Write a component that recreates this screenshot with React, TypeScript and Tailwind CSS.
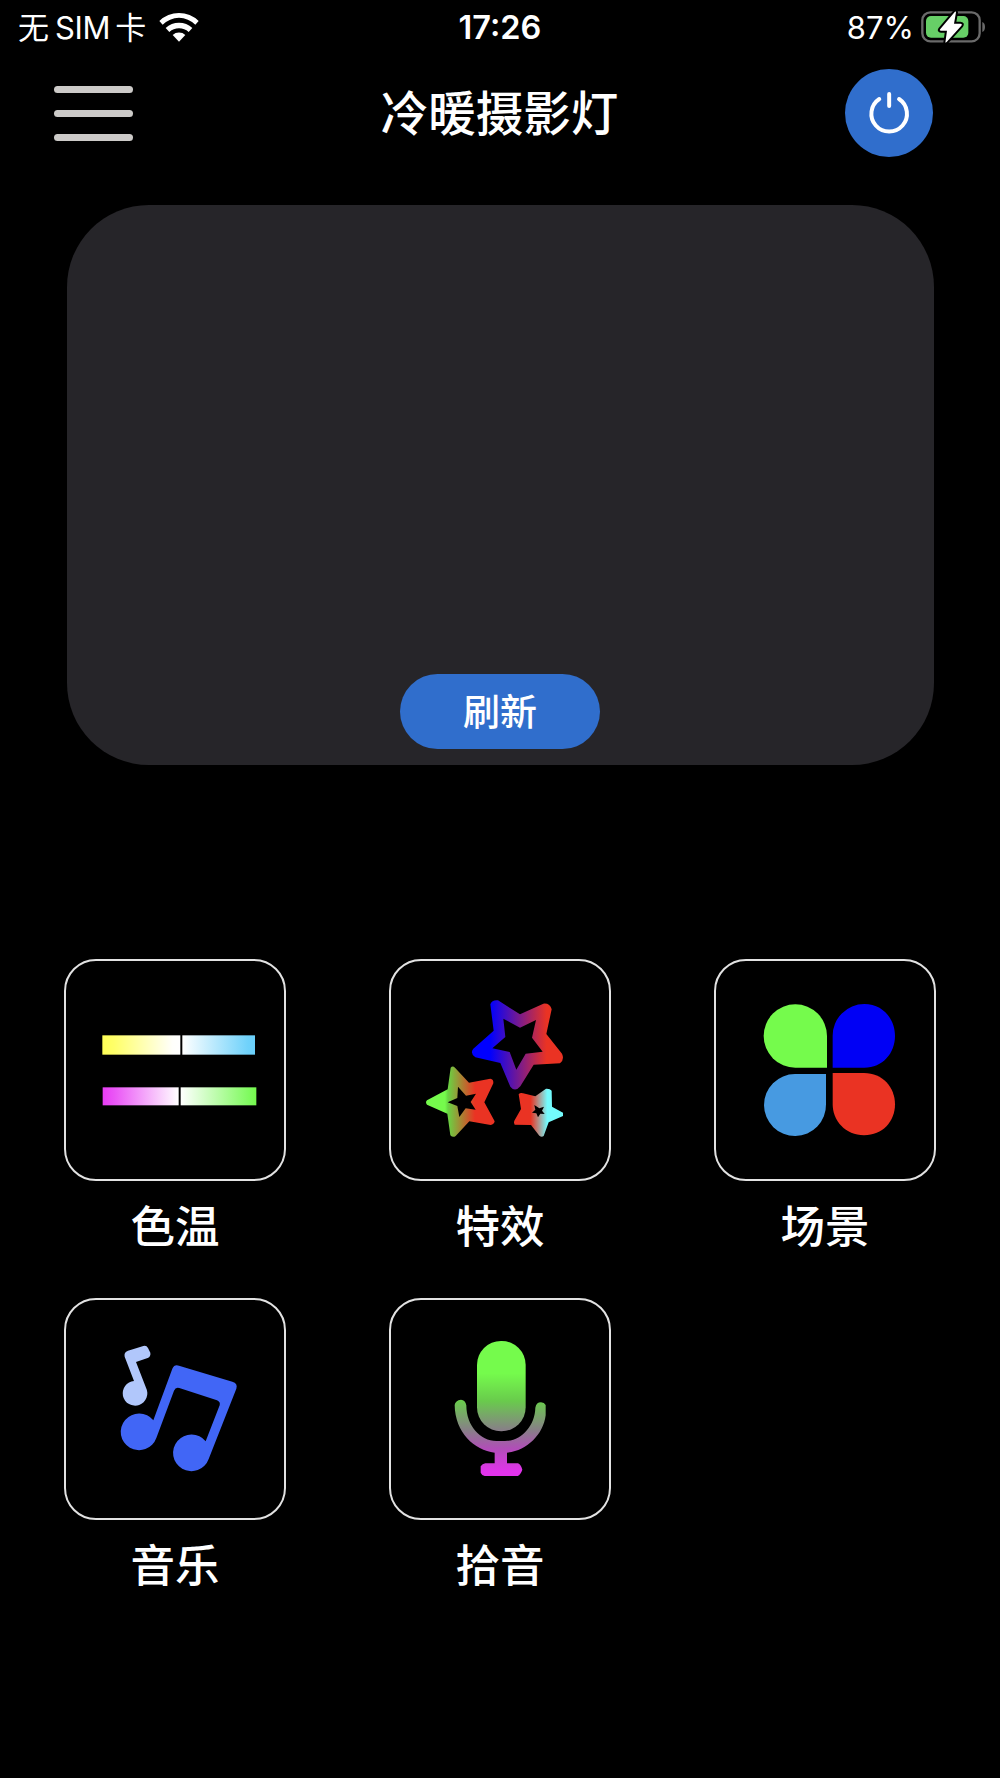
import type { ReactNode } from "react";

function WifiIcon() {
  return (
    <svg className="ml-[13px] h-[30px] w-10" viewBox="0 0 120 90">
      <path d="M1 27 A84 84 0 0 1 119 27 L109 38 A69 69 0 0 0 11 38 Z" fill="#fff" />
      <path d="M20 48 A58 58 0 0 1 100 48 L89 60 A43 43 0 0 0 31 60 Z" fill="#fff" />
      <path d="M41 69 A28 28 0 0 1 79 69 L60 89 Z" fill="#fff" />
    </svg>
  );
}

function BatteryIcon() {
  return (
    <svg className="ml-[6px] h-[34px] w-[66px]" viewBox="0 0 198 102">
      <rect x="7" y="7" width="172" height="87" rx="24" fill="none" stroke="#6a6a6a" strokeWidth="7" />
      <path d="M187 36 Q195 39 195 51 Q195 63 187 66 Z" fill="#6a6a6a" />
      <rect x="18" y="18" width="127" height="65" rx="15" fill="#67cf67" />
      <path
        d="M106 4 L61 57 Q57 62 63 62 H81 L76 98 L80 96 L124 47 Q128 41 121 41 H102 L108 7 Z"
        fill="#fff"
        stroke="#000"
        strokeWidth="12"
        strokeLinejoin="round"
        paintOrder="stroke"
      />
    </svg>
  );
}

function TemperatureIcon() {
  return (
    <svg className="h-full w-full" viewBox="48 33 654 654">
      <defs>
        <linearGradient id="yellow"><stop stopColor="#ffff55" /><stop offset=".15" stopColor="#ffff69" /><stop offset=".9" stopColor="#fffffb" /><stop offset="1" stopColor="#fff" /></linearGradient>
        <linearGradient id="sky"><stop stopColor="#fff" /><stop offset=".9" stopColor="#70d2fb" /><stop offset="1" stopColor="#69d0fb" /></linearGradient>
        <linearGradient id="pink"><stop stopColor="#e83cf5" /><stop offset=".15" stopColor="#ea55f6" /><stop offset="1" stopColor="#fff" /></linearGradient>
        <linearGradient id="lime"><stop stopColor="#fff" /><stop offset=".9" stopColor="#80fa60" /><stop offset="1" stopColor="#75f94d" /></linearGradient>
      </defs>
      <rect x="157" y="256" width="234" height="58" fill="url(#yellow)" />
      <rect x="397" y="256" width="218" height="58" fill="url(#sky)" />
      <rect x="158" y="412" width="228" height="54" fill="url(#pink)" />
      <rect x="392" y="412" width="227" height="54" fill="url(#lime)" />
    </svg>
  );
}

function EffectsIcon() {
  return (
    <svg className="h-full w-full" viewBox="33 33 654 654" fillRule="evenodd">
      <defs>
        <linearGradient id="starBig" gradientUnits="userSpaceOnUse" x1="330" x2="500" y1="0" y2="0"><stop stopColor="#0000ff" /><stop offset="1" stopColor="#ea3323" /></linearGradient>
        <linearGradient id="starLeft" gradientUnits="userSpaceOnUse" x1="195" x2="285" y1="0" y2="0"><stop stopColor="#75fb4c" /><stop offset="0.1" stopColor="#68d443" /><stop offset="1" stopColor="#ea3323" /></linearGradient>
        <linearGradient id="starRight" gradientUnits="userSpaceOnUse" x1="452" x2="502" y1="0" y2="0"><stop stopColor="#ea3323" /><stop offset="1" stopColor="#73fbfd" /></linearGradient>
      </defs>
      <path
        fill="url(#starBig)"
        d="M331 163 Q336 149 354 151 L420 193 L490 161 Q510 159 515 178 L499 252 L546 311 Q554 329 540 340 L461 344 L421 409 Q405 428 391 410 L361 339 L286 322 Q269 310 280 296 L341 242 Z M370 206 L376 261 L337 295 L389 306 L409 359 L437 311 L488 305 L456 263 L468 210 L420 233 Z"
      />
      <path
        fill="url(#starLeft)"
        d="M212 353 Q218 346 225 353 L267 398 L331 386 Q341 387 340 400 L313 457 L344 514 Q342 524 332 525 L268 514 L227 558 Q219 564 211 556 L202 491 L141 464 Q135 457 141 451 L203 418 Z M234 410 L232 444 L203 457 L232 468 L238 501 L257 475 L287 479 L272 456 L288 431 L258 437 Z"
      />
      <path
        fill="url(#starRight)"
        d="M416 433 Q421 427 429 430 L466 439 L498 416 Q510 415 515 422 L516 470 L549 488 V498 L506 517 L491 558 Q485 563 478 557 L453 525 L404 524 Q400 517 403 512 L423 477 Z M463 465 L466 479 L456 488 L469 490 L474 502 L481 491 L494 492 L486 482 L492 470 L478 475 Z"
      />
    </svg>
  );
}

function SceneIcon() {
  return (
    <svg className="h-full w-full" viewBox="48 33 654 654">
      <path d="M381 353 H286 A95 95 0 1 1 381 258 Z" fill="#75fb4c" />
      <path d="M398 353 V258 A95 95 0 0 1 493 162 C548 162 585 206 585 258 S548 353 493 353 Z" fill="#0000f5" />
      <path d="M378 372 V463 A93 93 0 1 1 285 372 Z" fill="#479ae1" />
      <path d="M398 369 H492 C548 369 585 412 585 463 S548 556 492 556 S398 512 398 463 Z" fill="#ea3323" />
    </svg>
  );
}

function MusicIcon() {
  return (
    <svg className="h-full w-full" viewBox="49 30 654 654">
      <path
        fill="#b1c7fb"
        d="M225 200 Q222 187 235 182 L281 168 Q290 165 295 174 L302 188 Q304 199 294 204 L259 216 L289 293 A37 37 0 1 1 253 273 Z"
      />
      <path
        fill="#4166f6"
        d="M368 236 Q374 222 388 227 L548 275 Q565 280 560 296 L477 507 A55 55 0 1 1 468 454 L510 346 Q513 336 502 331 L389 294 Q378 290 373 302 L320 444 A55 55 0 1 1 311 391 Z"
      />
    </svg>
  );
}

function MicrophoneIcon() {
  return (
    <svg className="h-full w-full" viewBox="34 30 654 654">
      <defs>
        <linearGradient id="mic" gradientUnits="userSpaceOnUse" x1="0" x2="0" y1="250" y2="545">
          <stop stopColor="#75fb4c" />
          <stop offset=".28" stopColor="#69cb4c" />
          <stop offset=".58" stopColor="#887f88" />
          <stop offset=".76" stopColor="#b04fb7" />
          <stop offset="1" stopColor="#e233ec" />
        </linearGradient>
      </defs>
      <rect x="292" y="153" width="146" height="271" rx="72" fill="url(#mic)" />
      <path
        fill="url(#mic)"
        d="M225 345 Q227 331 244 329 Q257 330 260 346 C260 408 302 453 350 453 H376 C424 453 466 408 467 353 Q470 337 484 337 Q494 337 498 345 V376 C491 434 441 483 382 488 V520 H415 Q423 522 428 539 Q423 554 414 558 H315 Q306 556 303 548 V529 Q308 521 317 520 H345 V488 C284 481 226 427 225 345 Z"
      />
    </svg>
  );
}

function ModeTile({ label, children }: { label: string; children: ReactNode }) {
  return (
    <button className="flex h-[339px] w-[222px] flex-col items-center">
      <span className="block size-[222px] rounded-[32px] border-2 border-[#e2e2e2]">{children}</span>
      <span className="mt-[14px] text-[44.5px] leading-[64px] font-medium">{label}</span>
    </button>
  );
}

export default function App() {
  return (
    <main className="h-[1778px] w-[1000px] overflow-hidden bg-black font-['Inter','Noto_Sans_CJK_SC',sans-serif] text-white">
      <header className="grid h-[54px] grid-cols-3 items-center text-[31px] leading-none">
        <div className="flex items-center pl-[18px] whitespace-nowrap">
          <span className="text-[31px]">无</span>
          <span className="ml-1.5 pt-px tracking-[-0.3px]">SIM</span>
          <span className="ml-[5px] text-[31px]">卡</span>
          <WifiIcon />
        </div>
        <time className="pt-[3px] text-center text-[32.5px] font-semibold">17:26</time>
        <div className="flex items-center justify-end pr-[14px]">
          <span className="pt-px">87%</span>
          <BatteryIcon />
        </div>
      </header>

      <nav className="grid h-[118px] grid-cols-[1fr_auto_1fr] items-center pr-[67px] pl-[54px]">
        <button className="flex w-[79px] flex-col gap-[17px] pt-px" aria-label="菜单">
          <span className="h-[7px] w-[79px] rounded-full bg-[#cccac8]" />
          <span className="h-[7px] w-[79px] rounded-full bg-[#cccac8]" />
          <span className="h-[7px] w-[79px] rounded-full bg-[#cccac8]" />
        </button>
        <h1 className="ml-[12px] pt-px text-[47.5px] leading-[70px] font-medium">冷暖摄影灯</h1>
        <button className="size-[88px] justify-self-end rounded-full bg-[#306ecc]" aria-label="电源">
          <svg className="size-full" viewBox="0 0 267 267" fill="none" stroke="#fff" strokeLinecap="round">
            <path d="M134 76 V112" strokeWidth="12" />
            <path d="M104 91 A54 54 0 1 0 164 91" strokeWidth="12" />
          </svg>
        </button>
      </nav>

      <section className="mx-auto mt-[33px] flex h-[560px] w-[867px] flex-col items-center justify-end rounded-[82px] bg-[#262529] pb-4">
        <button className="h-[75px] w-[200px] rounded-full bg-[#306ecc] pt-0.5 text-[37px] leading-[73px] font-medium">刷新</button>
      </section>

      <section className="mx-16 mt-[194px] grid grid-cols-3 justify-between gap-x-[103px]">
        <ModeTile label="色温"><TemperatureIcon /></ModeTile>
        <ModeTile label="特效"><EffectsIcon /></ModeTile>
        <ModeTile label="场景"><SceneIcon /></ModeTile>
        <ModeTile label="音乐"><MusicIcon /></ModeTile>
        <ModeTile label="拾音"><MicrophoneIcon /></ModeTile>
      </section>
    </main>
  );
}
